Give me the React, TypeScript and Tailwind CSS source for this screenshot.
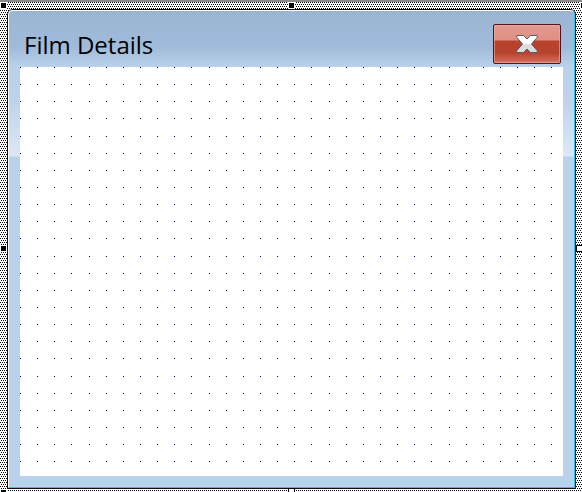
import React from "react";

const DOTS = [0, 17, 34, 51, 69, 86, 103];

function Hatch() {
  return (
    <svg className="absolute inset-0 h-full w-full" aria-hidden="true" shapeRendering="crispEdges">
      <defs>
        <pattern id="hatch" width="4" height="4" patternUnits="userSpaceOnUse">
          <rect width="4" height="4" fill="#fff" />
          <path d="M0 0h1v1h-1zM2 0h1v1h-1zM1 2h1v1h-1zM3 2h1v1h-1z" fill="#000" />
        </pattern>
      </defs>
      <rect width="100%" height="100%" fill="url(#hatch)" />
    </svg>
  );
}

function DesignGrid() {
  return (
    <svg className="block h-full w-full" aria-hidden="true" shapeRendering="crispEdges">
      <defs>
        <pattern id="grid" width="120" height="120" patternUnits="userSpaceOnUse">
          {DOTS.map((y) => DOTS.map((x) => <rect key={`${x}-${y}`} x={x} y={y} width="1" height="1" fill="#000080" />))}
        </pattern>
      </defs>
      <rect width="100%" height="100%" fill="url(#grid)" />
    </svg>
  );
}

function Handle({ place, hollow = false }: { place: string; hollow?: boolean }) {
  return (
    <span
      className={`absolute ${place} ${
        hollow ? "size-[7px] border border-black bg-white" : "size-[5px] bg-black outline outline-1 outline-white"
      }`}
    />
  );
}

export default function App() {
  return (
    <main className="relative h-screen w-full overflow-hidden border-t-2 border-[#8c8c8c] bg-white pt-[7px] pr-[6px] pb-[3px] pl-[7px]">
      <Hatch />
      <section className="relative flex h-full flex-col rounded-t-md border border-[#101010] bg-[#b9d1ea]">
        <div className="flex min-h-0 flex-1 flex-col rounded-t-[5px] border border-t-white border-r-[#28c8f0] border-b-[#28c8d8] border-l-white bg-[linear-gradient(#9bb5d3_0px,#a0bbda_36px,#b9d1ea_56px,#bdd3eb_90px,#dce8f5_145px,#b9d1ea_146px)] px-[11px] pb-[11px]">
          <header className="flex h-14 shrink-0 items-start justify-between">
            <h1 className="pt-[18px] pl-1 font-['Open_Sans',sans-serif] text-[24px] leading-8 text-black">Film Details</h1>
            <button
              type="button"
              aria-label="Close"
              className="mt-[13px] mr-[2px] flex h-10 w-[68px] items-center justify-center rounded-[2px] border border-[#4b1522] bg-[linear-gradient(#e39a8e_0px,#df8e82_15px,#b8432c_16px,#b8432c_28px,#d67360_38px)] inset-ring inset-ring-[#eeb0a5]/60"
            >
              <svg width="24" height="20" viewBox="0 0 24 20" aria-hidden="true">
                <defs>
                  <linearGradient id="cross" x1="0" y1="0" x2="0" y2="1">
                    <stop offset="0.48" stopColor="#fff" />
                    <stop offset="0.5" stopColor="#dcdcdc" />
                  </linearGradient>
                </defs>
                <path d="M2 1.5H8.5L12 5L15.5 1.5H22L22.5 3L16.5 10L22.5 17L22 18.5H15.5L12 15L8.5 18.5H2L1.5 17L7.5 10L1.5 3Z" fill="url(#cross)" stroke="#55586a" strokeWidth="1" />
              </svg>
            </button>
          </header>
          <div className="min-h-0 flex-1 bg-white">
            <DesignGrid />
          </div>
        </div>
      </section>
      <Handle place="left-px top-px" />
      <Handle place="left-1/2 top-px -ml-0.5" />
      <Handle place="right-[-4px] top-px" />
      <Handle place="left-px top-1/2 -mt-px" />
      <Handle place="right-[-1px] top-1/2 -mt-0.5" hollow />
      <Handle place="left-1/2 bottom-[-3px] -ml-[3px]" hollow />
      <Handle place="left-px bottom-[-3px]" />
    </main>
  );
}
